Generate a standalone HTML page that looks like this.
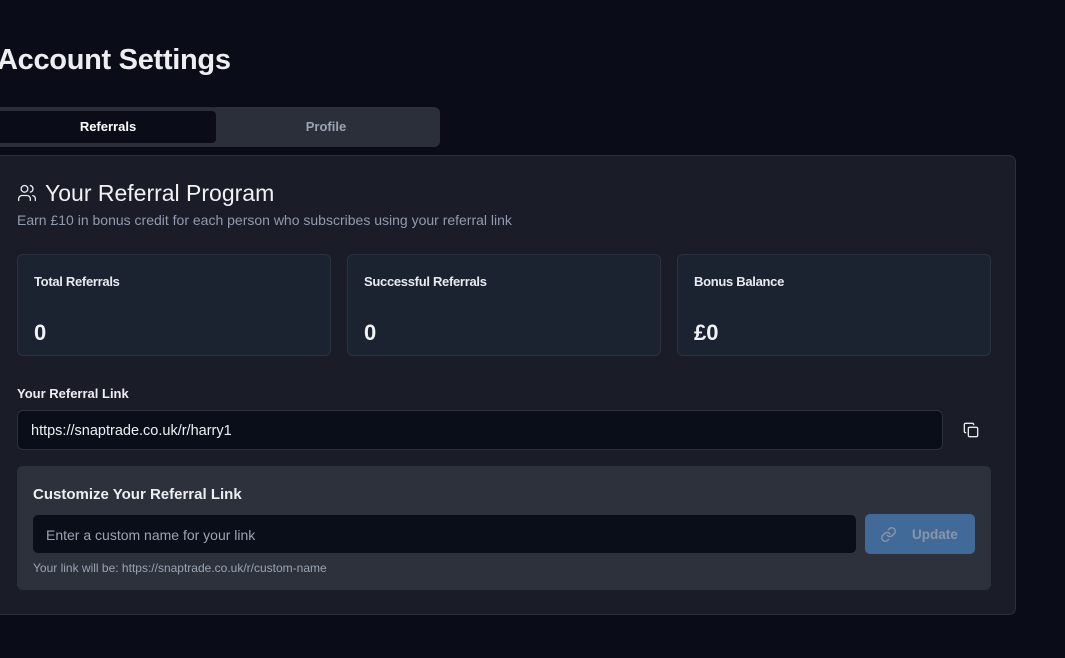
<!DOCTYPE html>
<html><head><style>
*{box-sizing:border-box;margin:0;padding:0}
body{width:1065px;height:658px;background:#0a0d17;font-family:"Liberation Sans",sans-serif;color:#e6e8ec;position:relative;overflow:hidden}
.abs{position:absolute}
h1{position:absolute;left:-3px;top:44px;font-size:29px;font-weight:bold;color:#eceef2;letter-spacing:-0.3px}
.tabs{left:-10px;top:107px;width:450px;height:40px;background:#2b2f3a;border-radius:6px}
.tab1{left:-10px;top:111px;width:226px;height:32px;background:#0a0d17;border-radius:4px;text-align:center;line-height:32px;font-size:13px;font-weight:bold;color:#fff;padding-left:10px}
.tab2{left:216px;top:111px;width:220px;height:32px;text-align:center;line-height:32px;font-size:13px;font-weight:bold;color:#9aa3b2}
.card{left:-10px;top:155px;width:1026px;height:460px;background:#1a1d27;border:1px solid #2c303b;border-radius:7px}
.stat{top:254px;width:314px;height:102px;background:#1b2230;border:1px solid #2a3140;border-radius:6px}
.stat .l{position:absolute;left:16px;top:19px;font-size:13px;font-weight:bold;color:#e8eaee;letter-spacing:-0.3px}
.stat .v{position:absolute;left:16px;top:65px;font-size:22px;font-weight:bold;color:#f1f2f5}
</style></head><body>
<h1>Account Settings</h1>
<div class="abs tabs"></div>
<div class="abs tab1">Referrals</div>
<div class="abs tab2">Profile</div>
<div class="abs card"></div>
<svg class="abs" style="left:17px;top:183px" width="20" height="20" viewBox="0 0 24 24" fill="none" stroke="#e6e8ec" stroke-width="1.6" stroke-linecap="round"><circle cx="9" cy="7" r="4"/><path d="M2 21v-2a4 4 0 0 1 4-4h6a4 4 0 0 1 4 4v2"/><path d="M16 3.1a4 4 0 0 1 0 7.8"/><path d="M22 21v-2a4 4 0 0 0-3-3.9"/></svg>
<div class="abs" style="left:45px;top:180px;font-size:23px;color:#f0f1f4">Your Referral Program</div>
<div class="abs" style="left:17px;top:212px;font-size:14px;color:#8f9bb0">Earn £10 in bonus credit for each person who subscribes using your referral link</div>
<div class="abs stat" style="left:17px"><div class="l">Total Referrals</div><div class="v">0</div></div>
<div class="abs stat" style="left:347px"><div class="l">Successful Referrals</div><div class="v">0</div></div>
<div class="abs stat" style="left:677px"><div class="l">Bonus Balance</div><div class="v">£0</div></div>
<div class="abs" style="left:17px;top:386px;font-size:13px;font-weight:bold;color:#eceef2">Your Referral Link</div>
<div class="abs" style="left:17px;top:410px;width:926px;height:40px;background:#0a0e19;border:1px solid #2c303b;border-radius:6px;padding-left:13px;line-height:40px;font-size:14.5px;color:#eceef2">https://snaptrade.co.uk/r/harry1</div>
<svg class="abs" style="left:963px;top:422px" width="16" height="16" viewBox="0 0 24 24" fill="none" stroke="#e6e8ec" stroke-width="2" stroke-linecap="round"><rect x="8" y="8" width="14" height="14" rx="2"/><path d="M4 16c-1.1 0-2-.9-2-2V4c0-1.1.9-2 2-2h10c1.1 0 2 .9 2 2"/></svg>
<div class="abs" style="left:17px;top:466px;width:974px;height:124px;background:#2d313c;border-radius:6px"></div>
<div class="abs" style="left:33px;top:486px;font-size:15px;font-weight:bold;color:#eceef2">Customize Your Referral Link</div>
<div class="abs" style="left:33px;top:515px;width:823px;height:38px;background:#0a0e19;border-radius:5px;padding-left:13px;line-height:40px;font-size:14px;color:#9ba3b2">Enter a custom name for your link</div>
<div class="abs" style="left:865px;top:514px;width:110px;height:40px;background:#416a99;border-radius:5px"></div>
<svg class="abs" style="left:880px;top:526px" width="17" height="17" viewBox="0 0 24 24" fill="none" stroke="#8a96a8" stroke-width="2" stroke-linecap="round"><path d="M10 13a5 5 0 0 0 7.5.5l3-3a5 5 0 0 0-7-7l-1.7 1.7"/><path d="M14 11a5 5 0 0 0-7.5-.5l-3 3a5 5 0 0 0 7 7l1.7-1.7"/></svg>
<div class="abs" style="left:912px;top:527px;font-size:13.5px;font-weight:bold;color:#8a96a8">Update</div>
<div class="abs" style="left:33px;top:561px;font-size:12px;color:#9aa4b4">Your link will be: https://snaptrade.co.uk/r/custom-name</div>
</body></html>
